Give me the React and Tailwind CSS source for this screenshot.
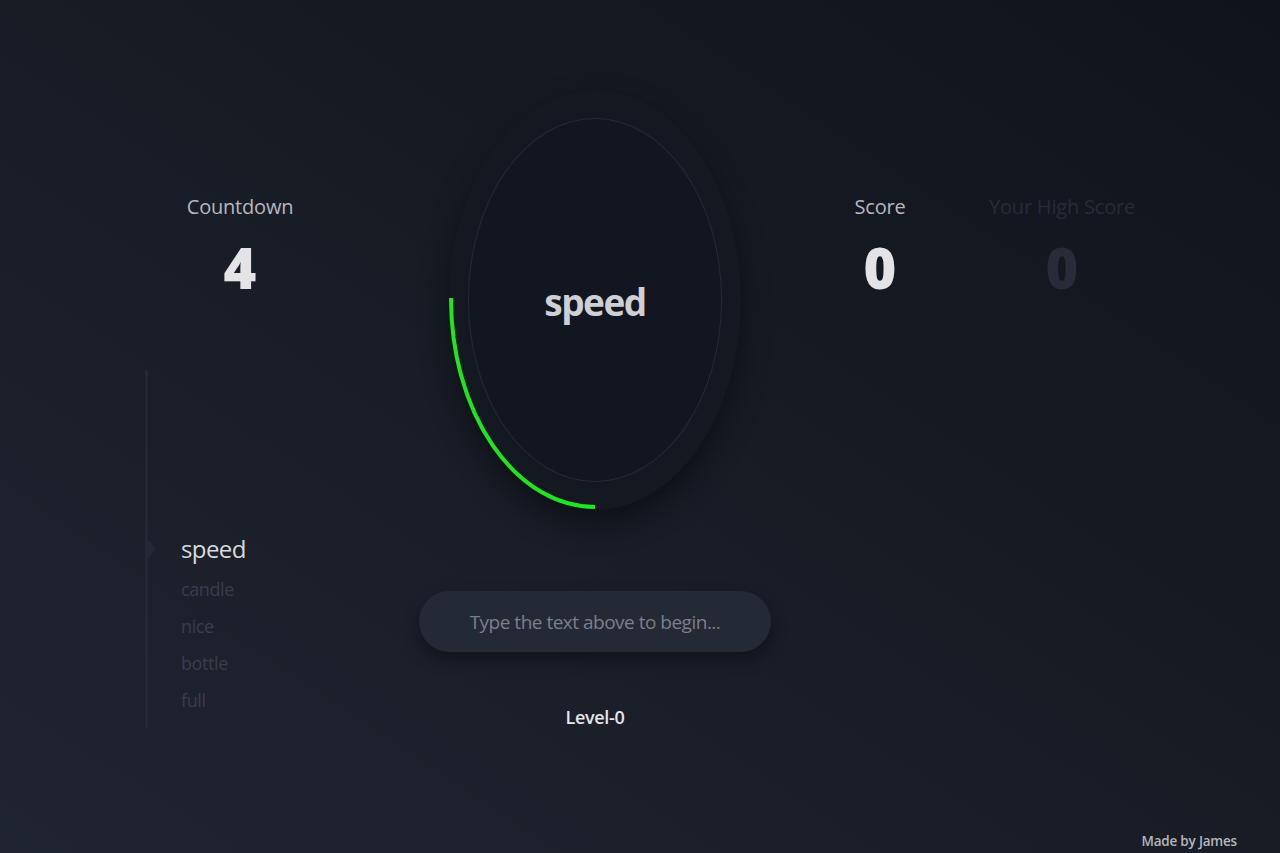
import React from 'react';

const font = { fontFamily: '"Open Sans", "Noto Sans", sans-serif' };

const StatBlock = ({ label, value, dim = false, width }) => (
    <div className={`flex flex-col items-center ${width}`}>
        <div className={`text-[20px] leading-[26px] tracking-[-0.2px] ${dim ? 'text-[#262c37]' : 'text-[#b4b8bf]'}`}>{label}</div>
        <div className={`mt-[14px] text-[56px] leading-[66px] font-extrabold ${dim ? 'text-[#262c38]' : 'text-[#e4e4e6]'}`}>
            {value}
        </div>
    </div>
);

const WordList = ({ words }) => (
    <div className="ml-[5px] mt-[70px] h-[358px] border-l-[3px] border-[#222834] flex flex-col justify-end pb-[9px] pl-[33px]">
        {words.map((w, i) =>
            i === 0 ? (
                <div key={w} className="relative text-[24px] leading-[45px] font-medium text-[#d9dadc] tracking-[-0.6px]">
                    <span className="absolute left-[-36px] top-[10px] w-0 h-0 border-y-[13px] border-y-transparent border-l-[11px] border-l-[#222834]" />
                    {w}
                </div>
            ) : (
                <div key={w} className="text-[18px] leading-[37px] text-[#383e49] tracking-[-0.4px]">{w}</div>
            )
        )}
    </div>
);

const Dial = () => (
    <div className="relative w-[292px] h-[420px] rounded-[50%] bg-[#141821] shadow-[0_14px_30px_rgba(0,0,0,0.45)] flex items-center justify-center">
        <div className="w-[254px] h-[364px] rounded-[50%] border border-[#262b37] bg-[#121620] flex items-center justify-center">
            <span className="text-[37px] font-bold text-[#cfd0d3] tracking-[-1.5px] pt-[4px]">speed</span>
        </div>
        <svg className="absolute inset-0" width="292" height="420" viewBox="0 0 292 420" fill="none">
            <path d="M 2 208 A 144 208 0 0 0 146 417" stroke="#1fe51f" strokeWidth="4" />
        </svg>
    </div>
);

export default function App() {
    return (
        <div
            className="w-full h-[853px] flex flex-col bg-[linear-gradient(to_top_right,#1f2431,#171c25_50%,#10141a)] overflow-hidden"
            style={font}
        >
            <main className="flex-1 flex pl-[140px] pt-[90px]">
                <div className="w-[200px] flex flex-col">
                    <div className="mt-[104px]">
                        <StatBlock label="Countdown" value="4" width="w-[200px]" />
                    </div>
                    <WordList words={['speed', 'candle', 'nice', 'bottle', 'full']} />
                </div>

                <div className="ml-[79px] w-[352px] flex flex-col items-center">
                    <Dial />
                    <input
                        type="text"
                        placeholder="Type the text above to begin..."
                        className="mt-[81px] w-[352px] h-[61px] rounded-full bg-[#232935] text-center text-[19px] tracking-[-0.5px] text-[#d0d2d6] placeholder-[#7b8089] outline-none shadow-[0_8px_16px_rgba(0,0,0,0.35)]"
                        style={font}
                    />
                    <div className="mt-[52px] text-[18px] leading-[26px] font-semibold text-[#e6e6e8] tracking-[-0.3px]">Level-0</div>
                </div>

                <div className="ml-[59px] mt-[104px] flex">
                    <StatBlock label="Score" value="0" width="w-[100px]" />
                    <div className="ml-[42px]">
                        <StatBlock label="Your High Score" value="0" dim width="w-[180px]" />
                    </div>
                </div>
            </main>

            <footer className="flex justify-end pr-[43px] pb-[2px]">
                <span className="text-[13.5px] leading-[20px] font-semibold text-[#b3b7bd] tracking-[-0.2px]">Made by James</span>
            </footer>
        </div>
    );
}
